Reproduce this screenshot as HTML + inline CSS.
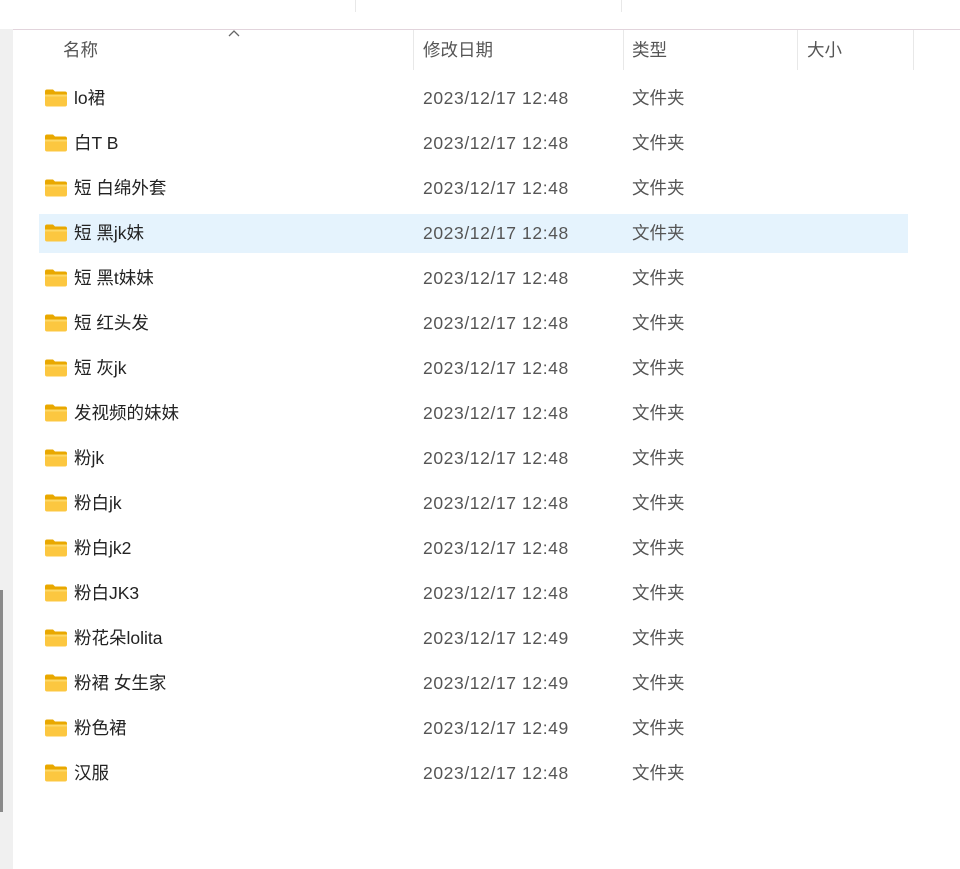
<!DOCTYPE html><html><head><style>
body{margin:0;width:960px;height:869px;background:#fff;position:relative;overflow:hidden;font-family:"Liberation Sans","Noto Sans CJK SC",sans-serif;}
.strip{position:absolute;left:0;top:29px;width:13px;height:840px;background:#f0f0f0}
.sb{position:absolute;left:0;top:590px;width:3px;height:222px;background:#8a8a8a}
.top{position:absolute;left:0;top:0;width:960px;height:29px;border-bottom:1px solid #e2d4dc}
.vl{position:absolute;top:0;height:12px;width:1px;background:#e8e8e8}
.h{position:absolute;top:30px;line-height:40px;font-size:17.5px;color:#555}
.hs{position:absolute;top:30px;width:1px;height:40px;background:#e8e8e8}
.row{position:absolute;left:39px;width:869px;height:39px}
.row.sel{background:#e5f3fd}
.row .f{position:absolute;left:6px;top:10px;width:22px;height:18px}
.row div{position:absolute;top:0;line-height:39px;font-size:17.5px}
.row .n{left:35px;color:#222}
.row .d{left:384px;color:#555;letter-spacing:0.6px}
.row .t{left:593px;color:#555}
</style></head><body>
<div class="top"><div class="vl" style="left:355px"></div><div class="vl" style="left:621px"></div></div>
<div class="strip"></div><div class="sb"></div>
<svg style="position:absolute;left:227px;top:29px" width="14" height="9"><path d="M2 7L7 2L12 7" stroke="#666" fill="none" stroke-width="1.3"/></svg>
<div class="h" style="left:63px">名称</div>
<div class="hs" style="left:413px"></div><div class="h" style="left:423px">修改日期</div>
<div class="hs" style="left:623px"></div><div class="h" style="left:632px">类型</div>
<div class="hs" style="left:797px"></div><div class="h" style="left:807px">大小</div>
<div class="hs" style="left:913px"></div>
<div id="rows"></div>
<script>
var names=["lo裙","白T B","短 白绵外套","短 黑jk妹","短 黑t妹妹","短 红头发","短 灰jk","发视频的妹妹","粉jk","粉白jk","粉白jk2","粉白JK3","粉花朵lolita","粉裙 女生家","粉色裙","汉服"];
var times=["12:48","12:48","12:48","12:48","12:48","12:48","12:48","12:48","12:48","12:48","12:48","12:48","12:49","12:49","12:49","12:48"];
var h="";
for(var i=0;i<16;i++){h+='<div class="row'+(i==3?' sel':'')+'" style="top:'+(79+45*i)+'px"><svg class="f" viewBox="0 0 22 17"><path d="M0 2Q0 0 2 0H8L10 2H20Q22 2 22 4V5H0Z" fill="#e9a800"/><path d="M0 5H22V15Q22 17 20 17H2Q0 17 0 15Z" fill="#fcc740"/><path d="M0 5H22V7H0Z" fill="#fdd869"/></svg><div class="n">'+names[i]+'</div><div class="d">2023/12/17 '+times[i]+'</div><div class="t">文件夹</div></div>';}
document.getElementById("rows").innerHTML=h;
</script>
</body></html>
